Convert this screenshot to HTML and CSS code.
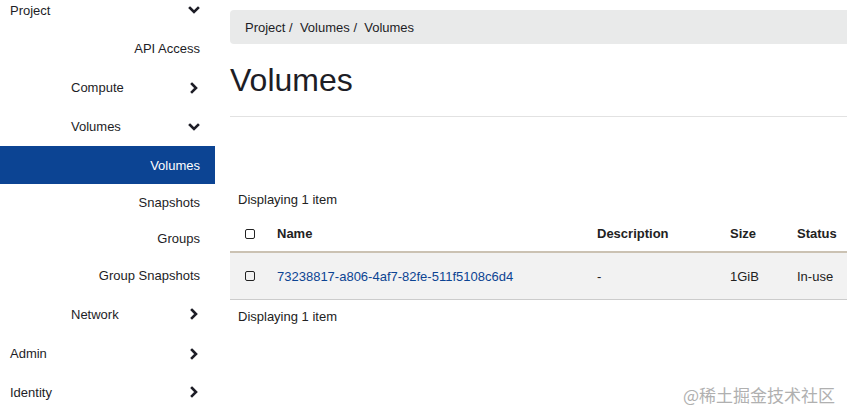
FILE: index.html
```html
<!DOCTYPE html>
<html>
<head>
<meta charset="utf-8">
<link rel="stylesheet" href="styles.css">
</head>
<body>
<div class="layout">
  <nav class="sidebar">
    <div class="nav-row top first"><span>Project</span><svg class="chev" viewBox="0 0 12 12"><polyline points="2,4 6,8 10,4"/></svg></div>
    <div class="nav-row sub">API Access</div>
    <div class="nav-row mid"><span>Compute</span><svg class="chev" viewBox="0 0 12 12"><polyline points="4,2 8,6 4,10"/></svg></div>
    <div class="nav-row mid"><span>Volumes</span><svg class="chev" viewBox="0 0 12 12"><polyline points="2,4 6,8 10,4"/></svg></div>
    <div class="nav-row sub active">Volumes</div>
    <div class="nav-row sub short snap">Snapshots</div>
    <div class="nav-row sub short">Groups</div>
    <div class="nav-row sub short">Group Snapshots</div>
    <div class="nav-row mid network"><span>Network</span><svg class="chev" viewBox="0 0 12 12"><polyline points="4,2 8,6 4,10"/></svg></div>
    <div class="nav-row top"><span>Admin</span><svg class="chev" viewBox="0 0 12 12"><polyline points="4,2 8,6 4,10"/></svg></div>
    <div class="nav-row top last"><span>Identity</span><svg class="chev" viewBox="0 0 12 12"><polyline points="4,2 8,6 4,10"/></svg></div>
  </nav>
  <main class="content">
    <div class="breadcrumb">Project /&nbsp; Volumes /&nbsp; Volumes</div>
    <h1 class="title">Volumes</h1>
    <div class="divider"></div>
    <div class="count">Displaying 1 item</div>
    <div class="table">
      <div class="thead">
        <div class="c-check"><span class="box"></span></div>
        <div class="c-name">Name</div>
        <div class="c-desc">Description</div>
        <div class="c-size">Size</div>
        <div class="c-status">Status</div>
      </div>
      <div class="trow">
        <div class="c-check"><span class="box"></span></div>
        <div class="c-name"><a class="link">73238817-a806-4af7-82fe-511f5108c6d4</a></div>
        <div class="c-desc">-</div>
        <div class="c-size">1GiB</div>
        <div class="c-status">In-use</div>
      </div>
    </div>
    <div class="count bottom">Displaying 1 item</div>
  </main>
</div>
<div class="watermark">@稀土掘金技术社区</div>
</body>
</html>
```
FILE: styles.css
```css
html, body {
  margin: 0;
  padding: 0;
  background: #fff;
  overflow: hidden;
}
body {
  font-family: "Liberation Sans", Arial, sans-serif;
  font-size: 13px;
  color: #222;
  width: 847px;
  height: 412px;
  position: relative;
}
.layout {
  display: flex;
  gap: 15px;
}
.sidebar {
  width: 215px;
  flex: none;
  display: flex;
  flex-direction: column;
}
.nav-row {
  height: 39px;
  display: flex;
  align-items: center;
  box-sizing: border-box;
  color: #1d1d26;
}
.nav-row.first {
  margin-top: -9px;
  height: 38px;
}
.nav-row.top {
  padding-left: 10px;
  padding-right: 15px;
  justify-content: space-between;
}
.nav-row.mid {
  padding-left: 71px;
  padding-right: 15px;
  justify-content: space-between;
}
.nav-row.sub {
  justify-content: flex-end;
  padding-right: 15px;
}
.nav-row.active {
  height: 38px;
  background: #0c4493;
  color: #fff;
}
.nav-row.short {
  height: 37px;
}
.nav-row.snap {
  height: 36px;
}
.nav-row.network {
  height: 40px;
}
.nav-row.last {
  height: 38px;
}
.chev {
  width: 12px;
  height: 12px;
  fill: none;
  stroke: #1d1d26;
  stroke-width: 2.6;
  stroke-linecap: square;
}
.content {
  flex: 1;
  padding-top: 10px;
}
.breadcrumb {
  height: 34px;
  background: #e9eaea;
  border-radius: 4px 0 0 4px;
  padding-left: 15px;
  display: flex;
  align-items: center;
  color: #1d1d26;
}
.title {
  margin: 0;
  font-weight: normal;
  font-size: 32px;
  line-height: 36px;
  padding-top: 18px;
  color: #1d1d26;
}
.divider {
  margin-top: 18px;
  height: 1px;
  background: #e2e2e2;
}
.count {
  margin-top: 75px;
  padding-left: 8px;
  line-height: 16px;
}
.count.bottom {
  margin-top: 9px;
}
.table {
  margin-top: 8px;
}
.thead, .trow {
  display: flex;
  align-items: center;
}
.thead {
  height: 35px;
  font-weight: bold;
  border-bottom: 2px solid #cbc2b3;
}
.trow {
  height: 46px;
  background: #f2f2f2;
  border-bottom: 1px solid #cccccc;
}
.c-check {
  width: 47px;
  padding-left: 15px;
  box-sizing: border-box;
  display: flex;
  align-items: center;
}
.box {
  width: 8px;
  height: 8px;
  border: 1.5px solid #222;
  border-radius: 2px;
  display: block;
}
.c-name { width: 320px; }
.c-desc { width: 133px; }
.c-size { width: 67px; }
.c-status { flex: 1; }
.link {
  color: #0c4493;
  text-decoration: none;
}
.watermark {
  position: absolute;
  left: 683px;
  top: 384px;
  font-family: "Noto Sans CJK SC", sans-serif;
  font-size: 17px;
  line-height: 22px;
  color: #b0b0b0;
}
```
